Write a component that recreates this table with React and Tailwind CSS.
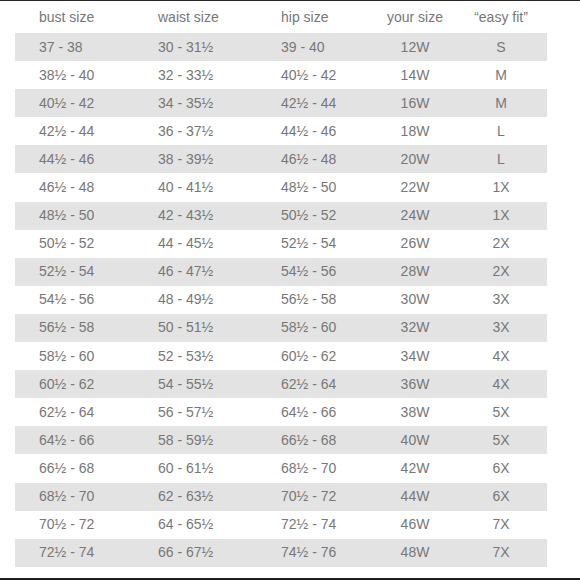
import React from 'react';

const rows = [
  ['37 - 38', '30 - 31½', '39 - 40', '12W', 'S'],
  ['38½ - 40', '32 - 33½', '40½ - 42', '14W', 'M'],
  ['40½ - 42', '34 - 35½', '42½ - 44', '16W', 'M'],
  ['42½ - 44', '36 - 37½', '44½ - 46', '18W', 'L'],
  ['44½ - 46', '38 - 39½', '46½ - 48', '20W', 'L'],
  ['46½ - 48', '40 - 41½', '48½ - 50', '22W', '1X'],
  ['48½ - 50', '42 - 43½', '50½ - 52', '24W', '1X'],
  ['50½ - 52', '44 - 45½', '52½ - 54', '26W', '2X'],
  ['52½ - 54', '46 - 47½', '54½ - 56', '28W', '2X'],
  ['54½ - 56', '48 - 49½', '56½ - 58', '30W', '3X'],
  ['56½ - 58', '50 - 51½', '58½ - 60', '32W', '3X'],
  ['58½ - 60', '52 - 53½', '60½ - 62', '34W', '4X'],
  ['60½ - 62', '54 - 55½', '62½ - 64', '36W', '4X'],
  ['62½ - 64', '56 - 57½', '64½ - 66', '38W', '5X'],
  ['64½ - 66', '58 - 59½', '66½ - 68', '40W', '5X'],
  ['66½ - 68', '60 - 61½', '68½ - 70', '42W', '6X'],
  ['68½ - 70', '62 - 63½', '70½ - 72', '44W', '6X'],
  ['70½ - 72', '64 - 65½', '72½ - 74', '46W', '7X'],
  ['72½ - 74', '66 - 67½', '74½ - 76', '48W', '7X'],
];

const Row = ({ cells, className }) => (
  <div className={`flex items-center pl-[24px] ${className}`}>
    <div className="w-[119px]">{cells[0]}</div>
    <div className="w-[123px]">{cells[1]}</div>
    <div className="w-[94px]">{cells[2]}</div>
    <div className="w-[80px] text-center">{cells[3]}</div>
    <div className="w-[92px] text-center">{cells[4]}</div>
  </div>
);

const SizeChart = () => {
  return (
    <div
      className="w-[580px] h-[580px] bg-white border-t border-t-[#2a2a2a] border-b-2 border-b-[#1e1e1e] text-[#777777] text-[14px] px-[15px]"
      style={{ fontFamily: '"Liberation Sans", Arial, sans-serif' }}
    >
      <div className="w-[532px]">
        <Row cells={['bust size', 'waist size', 'hip size', 'your size', '“easy fit”']} className="h-[32px]" />
        {rows.map((r, i) => (
          <Row key={i} cells={r} className={`h-[28.1px] ${i % 2 === 0 ? 'bg-[#e3e3e3]' : ''}`} />
        ))}
      </div>
    </div>
  );
};

export default SizeChart;
